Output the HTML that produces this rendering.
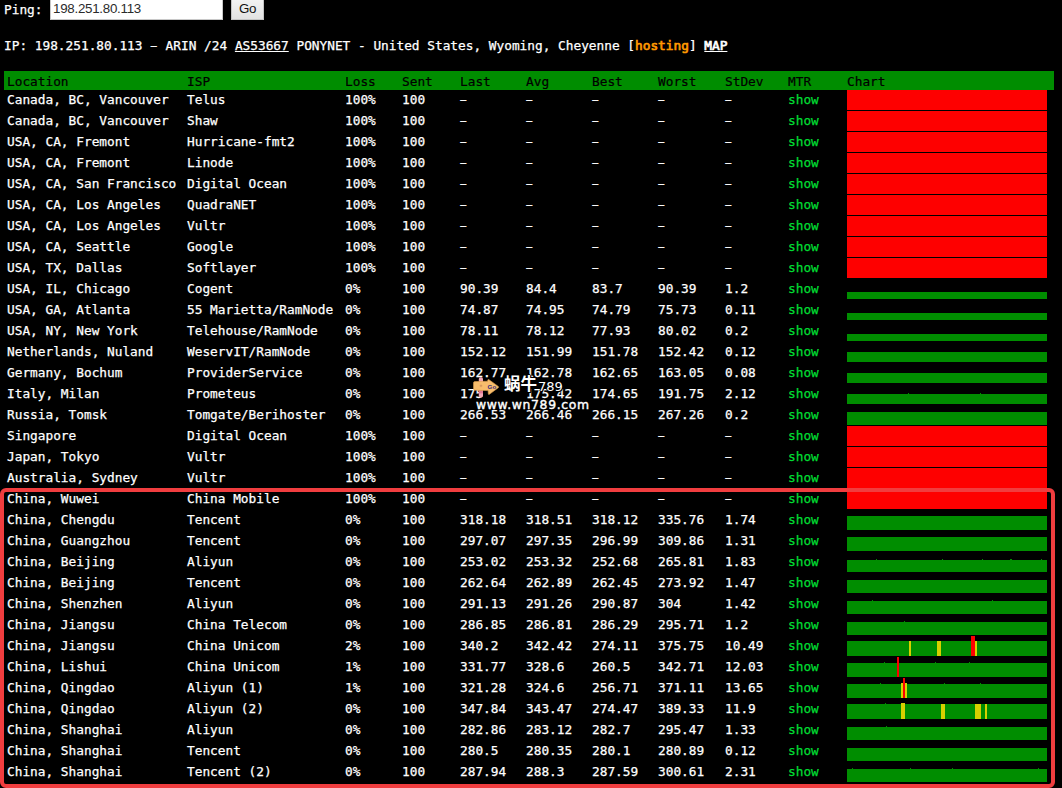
<!DOCTYPE html>
<html><head><meta charset="utf-8"><title>Ping</title>
<style>
html,body{margin:0;padding:0;background:#000;}
body{width:1062px;height:788px;overflow:hidden;position:relative;color:#fff;font-family:"DejaVu Sans Mono","Liberation Mono",monospace;font-size:12.79px;line-height:16px;}
.t{position:absolute;white-space:pre;}
.r{position:absolute;left:0;width:1062px;height:21px;}
.r span{position:absolute;top:2px;white-space:pre;-webkit-text-stroke:0.25px #fff;}
.r a{position:absolute;top:2px;left:788px;color:#0d3;text-decoration:none;-webkit-text-stroke:0.25px #0d3;}
.m{-webkit-text-stroke:0.25px #fff;}
.m b{font-weight:normal;-webkit-text-stroke:0.7px;}
.c{position:absolute;left:847px;top:0;width:200px;height:20px;overflow:hidden;}
.c i{position:absolute;bottom:0;display:block;}
.red{background:#fe0000;}
.hd{position:absolute;left:4px;top:71px;width:1050px;height:19px;background:#008d00;color:#000;}
.hd span{position:absolute;top:3px;white-space:pre;-webkit-text-stroke:0.2px #000;}
.wm{text-shadow:1px 1px 0 #000,1px 0 0 #000,0 1px 0 #000,-1px 0 0 #000,0 -1px 0 #000,0 0 2px #000;}
.d{transform:scaleX(.78);transform-origin:1px 0;}
</style></head><body>
<div class="t m" style="left:4px;top:2px;">Ping:</div>
<div style="position:absolute;left:50px;top:-3px;width:171px;height:21px;background:#fff;border:1px solid #c8c8c8;"></div>
<div class="t" style="left:53px;top:1px;font-family:'Liberation Sans',sans-serif;font-size:13.33px;letter-spacing:-0.26px;color:#2b2b2b;">198.251.80.113</div>
<div style="position:absolute;left:231px;top:-3px;width:31px;height:21px;background:linear-gradient(#f4f4f4,#e2e2e2);border:1px solid #c4c4c4;"></div>
<div class="t" style="left:239px;top:1px;font-family:'Liberation Sans',sans-serif;font-size:13.33px;letter-spacing:-0.26px;color:#111;">Go</div>
<div class="t m" style="left:4px;top:38px;">IP: 198.251.80.113 <span style="display:inline-block;transform:scaleX(.78)">–</span> ARIN /24 <u>AS53667</u> PONYNET - United States, Wyoming, Cheyenne [<b style="color:#f90;-webkit-text-stroke-color:#f90">hosting</b>] <b><u>MAP</u></b></div>
<div class="hd"><span style="left:3px">Location</span><span style="left:183px">ISP</span><span style="left:341px">Loss</span><span style="left:398px">Sent</span><span style="left:456px">Last</span><span style="left:522px">Avg</span><span style="left:588px">Best</span><span style="left:654px">Worst</span><span style="left:721px">StDev</span><span style="left:784px">MTR</span><span style="left:843px">Chart</span></div>
<div class="r" style="top:90px"><span style="left:7px">Canada, BC, Vancouver</span><span style="left:187px">Telus</span><span style="left:345px">100%</span><span style="left:402px">100</span><span class="d" style="left:460px">–</span><span class="d" style="left:526px">–</span><span class="d" style="left:592px">–</span><span class="d" style="left:658px">–</span><span class="d" style="left:725px">–</span><a>show</a><div class="c red"></div></div>
<div class="r" style="top:111px"><span style="left:7px">Canada, BC, Vancouver</span><span style="left:187px">Shaw</span><span style="left:345px">100%</span><span style="left:402px">100</span><span class="d" style="left:460px">–</span><span class="d" style="left:526px">–</span><span class="d" style="left:592px">–</span><span class="d" style="left:658px">–</span><span class="d" style="left:725px">–</span><a>show</a><div class="c red"></div></div>
<div class="r" style="top:132px"><span style="left:7px">USA, CA, Fremont</span><span style="left:187px">Hurricane-fmt2</span><span style="left:345px">100%</span><span style="left:402px">100</span><span class="d" style="left:460px">–</span><span class="d" style="left:526px">–</span><span class="d" style="left:592px">–</span><span class="d" style="left:658px">–</span><span class="d" style="left:725px">–</span><a>show</a><div class="c red"></div></div>
<div class="r" style="top:153px"><span style="left:7px">USA, CA, Fremont</span><span style="left:187px">Linode</span><span style="left:345px">100%</span><span style="left:402px">100</span><span class="d" style="left:460px">–</span><span class="d" style="left:526px">–</span><span class="d" style="left:592px">–</span><span class="d" style="left:658px">–</span><span class="d" style="left:725px">–</span><a>show</a><div class="c red"></div></div>
<div class="r" style="top:174px"><span style="left:7px">USA, CA, San Francisco</span><span style="left:187px">Digital Ocean</span><span style="left:345px">100%</span><span style="left:402px">100</span><span class="d" style="left:460px">–</span><span class="d" style="left:526px">–</span><span class="d" style="left:592px">–</span><span class="d" style="left:658px">–</span><span class="d" style="left:725px">–</span><a>show</a><div class="c red"></div></div>
<div class="r" style="top:195px"><span style="left:7px">USA, CA, Los Angeles</span><span style="left:187px">QuadraNET</span><span style="left:345px">100%</span><span style="left:402px">100</span><span class="d" style="left:460px">–</span><span class="d" style="left:526px">–</span><span class="d" style="left:592px">–</span><span class="d" style="left:658px">–</span><span class="d" style="left:725px">–</span><a>show</a><div class="c red"></div></div>
<div class="r" style="top:216px"><span style="left:7px">USA, CA, Los Angeles</span><span style="left:187px">Vultr</span><span style="left:345px">100%</span><span style="left:402px">100</span><span class="d" style="left:460px">–</span><span class="d" style="left:526px">–</span><span class="d" style="left:592px">–</span><span class="d" style="left:658px">–</span><span class="d" style="left:725px">–</span><a>show</a><div class="c red"></div></div>
<div class="r" style="top:237px"><span style="left:7px">USA, CA, Seattle</span><span style="left:187px">Google</span><span style="left:345px">100%</span><span style="left:402px">100</span><span class="d" style="left:460px">–</span><span class="d" style="left:526px">–</span><span class="d" style="left:592px">–</span><span class="d" style="left:658px">–</span><span class="d" style="left:725px">–</span><a>show</a><div class="c red"></div></div>
<div class="r" style="top:258px"><span style="left:7px">USA, TX, Dallas</span><span style="left:187px">Softlayer</span><span style="left:345px">100%</span><span style="left:402px">100</span><span class="d" style="left:460px">–</span><span class="d" style="left:526px">–</span><span class="d" style="left:592px">–</span><span class="d" style="left:658px">–</span><span class="d" style="left:725px">–</span><a>show</a><div class="c red"></div></div>
<div class="r" style="top:279px"><span style="left:7px">USA, IL, Chicago</span><span style="left:187px">Cogent</span><span style="left:345px">0%</span><span style="left:402px">100</span><span style="left:460px">90.39</span><span style="left:526px">84.4</span><span style="left:592px">83.7</span><span style="left:658px">90.39</span><span style="left:725px">1.2</span><a>show</a><div class="c"><i style="left:0;width:200px;height:7px;background:#008d00"></i></div></div>
<div class="r" style="top:300px"><span style="left:7px">USA, GA, Atlanta</span><span style="left:187px">55 Marietta/RamNode</span><span style="left:345px">0%</span><span style="left:402px">100</span><span style="left:460px">74.87</span><span style="left:526px">74.95</span><span style="left:592px">74.79</span><span style="left:658px">75.73</span><span style="left:725px">0.11</span><a>show</a><div class="c"><i style="left:0;width:200px;height:7px;background:#008d00"></i></div></div>
<div class="r" style="top:321px"><span style="left:7px">USA, NY, New York</span><span style="left:187px">Telehouse/RamNode</span><span style="left:345px">0%</span><span style="left:402px">100</span><span style="left:460px">78.11</span><span style="left:526px">78.12</span><span style="left:592px">77.93</span><span style="left:658px">80.02</span><span style="left:725px">0.2</span><a>show</a><div class="c"><i style="left:0;width:200px;height:7px;background:#008d00"></i></div></div>
<div class="r" style="top:342px"><span style="left:7px">Netherlands, Nuland</span><span style="left:187px">WeservIT/RamNode</span><span style="left:345px">0%</span><span style="left:402px">100</span><span style="left:460px">152.12</span><span style="left:526px">151.99</span><span style="left:592px">151.78</span><span style="left:658px">152.42</span><span style="left:725px">0.12</span><a>show</a><div class="c"><i style="left:0;width:200px;height:10px;background:#008d00"></i></div></div>
<div class="r" style="top:363px"><span style="left:7px">Germany, Bochum</span><span style="left:187px">ProviderService</span><span style="left:345px">0%</span><span style="left:402px">100</span><span style="left:460px">162.77</span><span style="left:526px">162.78</span><span style="left:592px">162.65</span><span style="left:658px">163.05</span><span style="left:725px">0.08</span><a>show</a><div class="c"><i style="left:0;width:200px;height:10px;background:#008d00"></i></div></div>
<div class="r" style="top:384px"><span style="left:7px">Italy, Milan</span><span style="left:187px">Prometeus</span><span style="left:345px">0%</span><span style="left:402px">100</span><span style="left:460px">175.42</span><span style="left:526px">175.42</span><span style="left:592px">174.65</span><span style="left:658px">191.75</span><span style="left:725px">2.12</span><a>show</a><div class="c"><i style="left:0;width:200px;height:10px;background:#008d00"></i><i style="left:61px;width:1px;height:11px;background:#008d00"></i><i style="left:133px;width:1px;height:11px;background:#008d00"></i></div></div>
<div class="r" style="top:405px"><span style="left:7px">Russia, Tomsk</span><span style="left:187px">Tomgate/Berihoster</span><span style="left:345px">0%</span><span style="left:402px">100</span><span style="left:460px">266.53</span><span style="left:526px">266.46</span><span style="left:592px">266.15</span><span style="left:658px">267.26</span><span style="left:725px">0.2</span><a>show</a><div class="c"><i style="left:0;width:200px;height:13px;background:#008d00"></i></div></div>
<div class="r" style="top:426px"><span style="left:7px">Singapore</span><span style="left:187px">Digital Ocean</span><span style="left:345px">100%</span><span style="left:402px">100</span><span class="d" style="left:460px">–</span><span class="d" style="left:526px">–</span><span class="d" style="left:592px">–</span><span class="d" style="left:658px">–</span><span class="d" style="left:725px">–</span><a>show</a><div class="c red"></div></div>
<div class="r" style="top:447px"><span style="left:7px">Japan, Tokyo</span><span style="left:187px">Vultr</span><span style="left:345px">100%</span><span style="left:402px">100</span><span class="d" style="left:460px">–</span><span class="d" style="left:526px">–</span><span class="d" style="left:592px">–</span><span class="d" style="left:658px">–</span><span class="d" style="left:725px">–</span><a>show</a><div class="c red"></div></div>
<div class="r" style="top:468px"><span style="left:7px">Australia, Sydney</span><span style="left:187px">Vultr</span><span style="left:345px">100%</span><span style="left:402px">100</span><span class="d" style="left:460px">–</span><span class="d" style="left:526px">–</span><span class="d" style="left:592px">–</span><span class="d" style="left:658px">–</span><span class="d" style="left:725px">–</span><a>show</a><div class="c red"></div></div>
<div class="r" style="top:489px"><span style="left:7px">China, Wuwei</span><span style="left:187px">China Mobile</span><span style="left:345px">100%</span><span style="left:402px">100</span><span class="d" style="left:460px">–</span><span class="d" style="left:526px">–</span><span class="d" style="left:592px">–</span><span class="d" style="left:658px">–</span><span class="d" style="left:725px">–</span><a>show</a><div class="c red"></div></div>
<div class="r" style="top:510px"><span style="left:7px">China, Chengdu</span><span style="left:187px">Tencent</span><span style="left:345px">0%</span><span style="left:402px">100</span><span style="left:460px">318.18</span><span style="left:526px">318.51</span><span style="left:592px">318.12</span><span style="left:658px">335.76</span><span style="left:725px">1.74</span><a>show</a><div class="c"><i style="left:0;width:200px;height:14px;background:#008d00"></i></div></div>
<div class="r" style="top:531px"><span style="left:7px">China, Guangzhou</span><span style="left:187px">Tencent</span><span style="left:345px">0%</span><span style="left:402px">100</span><span style="left:460px">297.07</span><span style="left:526px">297.35</span><span style="left:592px">296.99</span><span style="left:658px">309.86</span><span style="left:725px">1.31</span><a>show</a><div class="c"><i style="left:0;width:200px;height:14px;background:#008d00"></i></div></div>
<div class="r" style="top:552px"><span style="left:7px">China, Beijing</span><span style="left:187px">Aliyun</span><span style="left:345px">0%</span><span style="left:402px">100</span><span style="left:460px">253.02</span><span style="left:526px">253.32</span><span style="left:592px">252.68</span><span style="left:658px">265.81</span><span style="left:725px">1.83</span><a>show</a><div class="c"><i style="left:0;width:200px;height:12px;background:#008d00"></i><i style="left:29px;width:1px;height:13px;background:#008d00"></i><i style="left:95px;width:1px;height:13px;background:#008d00"></i><i style="left:135px;width:1px;height:13px;background:#008d00"></i><i style="left:163px;width:1px;height:13px;background:#008d00"></i><i style="left:164px;width:1px;height:13px;background:#008d00"></i><i style="left:194px;width:1px;height:13px;background:#008d00"></i></div></div>
<div class="r" style="top:573px"><span style="left:7px">China, Beijing</span><span style="left:187px">Tencent</span><span style="left:345px">0%</span><span style="left:402px">100</span><span style="left:460px">262.64</span><span style="left:526px">262.89</span><span style="left:592px">262.45</span><span style="left:658px">273.92</span><span style="left:725px">1.47</span><a>show</a><div class="c"><i style="left:0;width:200px;height:13px;background:#008d00"></i></div></div>
<div class="r" style="top:594px"><span style="left:7px">China, Shenzhen</span><span style="left:187px">Aliyun</span><span style="left:345px">0%</span><span style="left:402px">100</span><span style="left:460px">291.13</span><span style="left:526px">291.26</span><span style="left:592px">290.87</span><span style="left:658px">304</span><span style="left:725px">1.42</span><a>show</a><div class="c"><i style="left:0;width:200px;height:13px;background:#008d00"></i><i style="left:25px;width:1px;height:14px;background:#008d00"></i><i style="left:145px;width:1px;height:14px;background:#008d00"></i></div></div>
<div class="r" style="top:615px"><span style="left:7px">China, Jiangsu</span><span style="left:187px">China Telecom</span><span style="left:345px">0%</span><span style="left:402px">100</span><span style="left:460px">286.85</span><span style="left:526px">286.81</span><span style="left:592px">286.29</span><span style="left:658px">295.71</span><span style="left:725px">1.2</span><a>show</a><div class="c"><i style="left:0;width:200px;height:13px;background:#008d00"></i><i style="left:57px;width:1px;height:14px;background:#008d00"></i></div></div>
<div class="r" style="top:636px"><span style="left:7px">China, Jiangsu</span><span style="left:187px">China Unicom</span><span style="left:345px">2%</span><span style="left:402px">100</span><span style="left:460px">340.2</span><span style="left:526px">342.42</span><span style="left:592px">274.11</span><span style="left:658px">375.75</span><span style="left:725px">10.49</span><a>show</a><div class="c"><i style="left:0;width:200px;height:15px;background:#008d00"></i><i style="left:62px;width:2px;height:15px;background:#d8d000"></i><i style="left:90px;width:4px;height:15px;background:#d8d000"></i><i style="left:124px;width:4px;height:20px;background:#fe0000"></i><i style="left:128px;width:2px;height:15px;background:#d8d000"></i></div></div>
<div class="r" style="top:657px"><span style="left:7px">China, Lishui</span><span style="left:187px">China Unicom</span><span style="left:345px">1%</span><span style="left:402px">100</span><span style="left:460px">331.77</span><span style="left:526px">328.6</span><span style="left:592px">260.5</span><span style="left:658px">342.71</span><span style="left:725px">12.03</span><a>show</a><div class="c"><i style="left:0;width:200px;height:14px;background:#008d00"></i><i style="left:37px;width:1px;height:15px;background:#008d00"></i><i style="left:88px;width:1px;height:15px;background:#008d00"></i><i style="left:122px;width:1px;height:15px;background:#008d00"></i><i style="left:50px;width:2px;height:20px;background:#fe0000"></i></div></div>
<div class="r" style="top:678px"><span style="left:7px">China, Qingdao</span><span style="left:187px">Aliyun (1)</span><span style="left:345px">1%</span><span style="left:402px">100</span><span style="left:460px">321.28</span><span style="left:526px">324.6</span><span style="left:592px">256.71</span><span style="left:658px">371.11</span><span style="left:725px">13.65</span><a>show</a><div class="c"><i style="left:0;width:200px;height:14px;background:#008d00"></i><i style="left:33px;width:1px;height:15px;background:#008d00"></i><i style="left:97px;width:1px;height:15px;background:#008d00"></i><i style="left:133px;width:1px;height:15px;background:#008d00"></i><i style="left:54px;width:6px;height:15px;background:#d8d000"></i><i style="left:56px;width:2px;height:20px;background:#fe0000"></i></div></div>
<div class="r" style="top:699px"><span style="left:7px">China, Qingdao</span><span style="left:187px">Aliyun (2)</span><span style="left:345px">0%</span><span style="left:402px">100</span><span style="left:460px">347.84</span><span style="left:526px">343.47</span><span style="left:592px">274.47</span><span style="left:658px">389.33</span><span style="left:725px">11.9</span><a>show</a><div class="c"><i style="left:0;width:200px;height:15px;background:#008d00"></i><i style="left:38px;width:1px;height:16px;background:#008d00"></i><i style="left:54px;width:4px;height:16px;background:#d8d000"></i><i style="left:94px;width:4px;height:15px;background:#d8d000"></i><i style="left:128px;width:6px;height:15px;background:#d8d000"></i><i style="left:138px;width:2px;height:15px;background:#d8d000"></i></div></div>
<div class="r" style="top:720px"><span style="left:7px">China, Shanghai</span><span style="left:187px">Aliyun</span><span style="left:345px">0%</span><span style="left:402px">100</span><span style="left:460px">282.86</span><span style="left:526px">283.12</span><span style="left:592px">282.7</span><span style="left:658px">295.47</span><span style="left:725px">1.33</span><a>show</a><div class="c"><i style="left:0;width:200px;height:13px;background:#008d00"></i><i style="left:39px;width:1px;height:14px;background:#008d00"></i></div></div>
<div class="r" style="top:741px"><span style="left:7px">China, Shanghai</span><span style="left:187px">Tencent</span><span style="left:345px">0%</span><span style="left:402px">100</span><span style="left:460px">280.5</span><span style="left:526px">280.35</span><span style="left:592px">280.1</span><span style="left:658px">280.89</span><span style="left:725px">0.12</span><a>show</a><div class="c"><i style="left:0;width:200px;height:13px;background:#008d00"></i></div></div>
<div class="r" style="top:762px"><span style="left:7px">China, Shanghai</span><span style="left:187px">Tencent (2)</span><span style="left:345px">0%</span><span style="left:402px">100</span><span style="left:460px">287.94</span><span style="left:526px">288.3</span><span style="left:592px">287.59</span><span style="left:658px">300.61</span><span style="left:725px">2.31</span><a>show</a><div class="c"><i style="left:0;width:200px;height:13px;background:#008d00"></i><i style="left:5px;width:1px;height:14px;background:#008d00"></i><i style="left:63px;width:1px;height:14px;background:#008d00"></i><i style="left:105px;width:1px;height:14px;background:#008d00"></i><i style="left:191px;width:1px;height:14px;background:#008d00"></i></div></div>
<div style="position:absolute;left:0;top:488px;width:1047px;height:292px;border:4px solid #f03d3f;border-radius:6px;"></div>
<div style="position:absolute;left:483px;top:388px;width:24px;height:12px;background:#000;"></div>
<svg style="position:absolute;left:470px;top:375px" width="32" height="25" viewBox="0 0 32 25"><rect x="8.8" y="2.2" width="4.2" height="20.3" rx="1.8" fill="#f2a7b6"/><rect x="8.8" y="15" width="4.2" height="3.4" fill="#e27892"/><path d="M4.6 6.6 L17.6 6.2 L17.8 5 Q18 4 19 4.7 L28.3 11.4 Q29 12 28.3 12.7 L19.4 19.3 Q18.4 19.9 18.3 18.8 L18.1 15.6 L4.8 15.2 Q3.5 15 3.5 13.8 L3.5 8 Q3.5 6.7 4.6 6.6 Z" fill="#f8bd6c" stroke="#d99a4a" stroke-width="0.6"/><path d="M11 9.5 v2.6 M9.7 10.8 h2.6" stroke="#c98a5a" stroke-width="0.7" fill="none"/><text x="17.6" y="14.3" font-family="Liberation Sans, sans-serif" font-size="6.2" font-weight="bold" fill="#3b2c7c">Go</text></svg>
<div class="t wm" style="left:504px;top:373px;font-family:'Noto Sans CJK SC','WenQuanYi Zen Hei',sans-serif;font-weight:bold;font-size:16.5px;line-height:20px;">蜗牛</div>
<div class="t wm" style="left:538px;top:379px;font-family:'DejaVu Sans',sans-serif;font-size:13px;line-height:15px;">789</div>
<div class="t wm" style="left:476px;top:397px;font-family:'DejaVu Sans',sans-serif;font-size:12.4px;line-height:16px;letter-spacing:0.65px;-webkit-text-stroke:0.4px #fff;">www.wn789.com</div>
</body></html>
